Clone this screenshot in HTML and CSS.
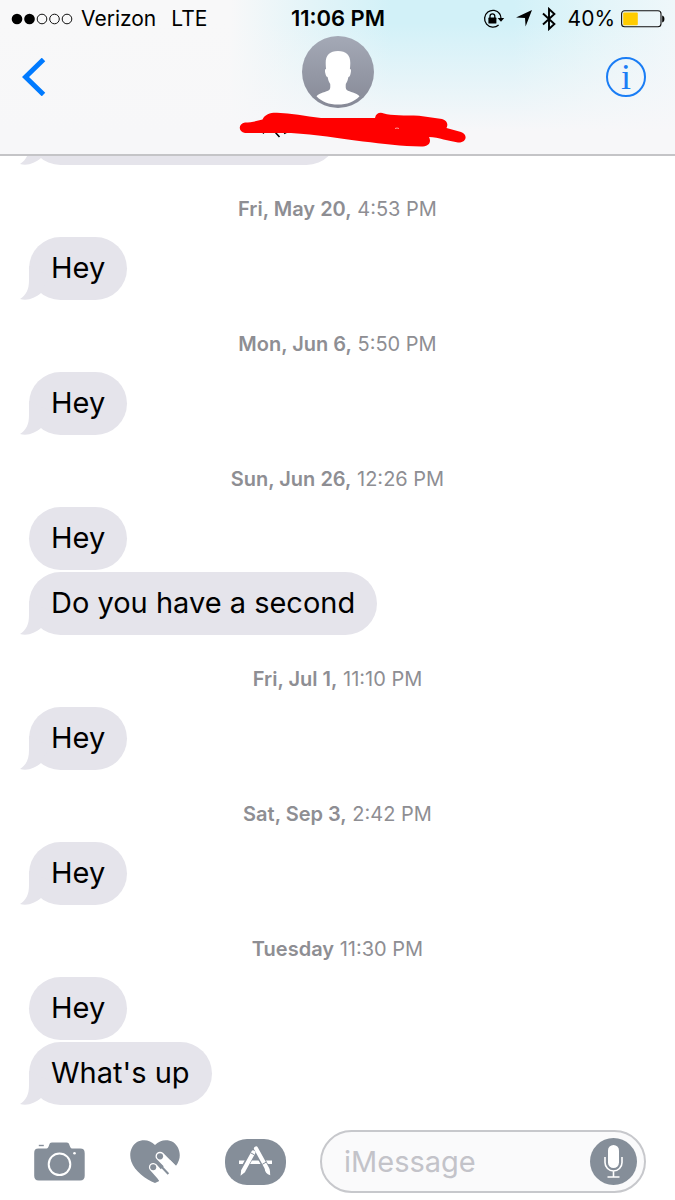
FILE: index.html
```html
<!DOCTYPE html>
<html lang="en">
<head>
  <meta charset="UTF-8">
  <title>Messages</title>
  <meta name="viewport" content="width=device-width,initial-scale=1">
  <link rel="stylesheet" href="styles.css">
</head>
<body>

  <header class="header">
    <div class="status">
      <div class="status-left">
        <svg class="signal" width="62" height="12" viewBox="0 0 62 12">
          <circle cx="6" cy="6" r="5.3"/>
          <circle cx="18.5" cy="6" r="5.3"/>
          <g fill="none" stroke="#111" stroke-width="1">
            <circle cx="31" cy="6" r="4.8"/>
            <circle cx="43.5" cy="6" r="4.8"/>
            <circle cx="56" cy="6" r="4.8"/>
          </g>
        </svg>
        <span>Verizon</span>
        <span class="network">LTE</span>
      </div>
      <div class="clock">11:06 PM</div>
      <div class="status-right">
        <!-- rotation lock -->
        <svg width="22" height="20" viewBox="0 0 22 20">
          <path d="M16.8 4.8A8.4 8.4 0 1 0 15.6 16" fill="none" stroke="#000" stroke-width="1.3"/>
          <path d="M16.2 4.2C17.4 5.7 18 7.4 18 9.5" fill="none" stroke="#000" stroke-width="1.3"/>
          <path d="M14.6 9h6.6L18 12.8z"/>
          <rect x="5.4" y="8.6" width="8" height="6" rx=".6"/>
          <path d="M7 9V7.2a2.4 2.4 0 0 1 4.8 0V9" fill="none" stroke="#000" stroke-width="1.3"/>
        </svg>
        <!-- location -->
        <svg class="location" width="16" height="17" viewBox="0 0 16 17">
          <path d="M16 0L9.6 16.5 9 8 0 7.4z"/>
        </svg>
        <!-- bluetooth -->
        <svg width="14" height="24" viewBox="0 0 14 24">
          <path d="M1 6.5L12.4 17 7 22V2l5.4 5L1 17.5" fill="none" stroke="#000" stroke-width="1.9"/>
        </svg>
        <span class="percent">40%</span>
        <!-- battery -->
        <svg width="44" height="18" viewBox="0 0 44 18">
          <rect x=".6" y=".8" width="39.4" height="16" rx="3" fill="none" stroke="#111" stroke-width="1.1"/>
          <rect x="2.2" y="2.4" width="14.6" height="12.8" rx="1" fill="#fc0"/>
          <path d="M41.2 5.4c3 .6 3 6.4 0 7z"/>
        </svg>
      </div>
    </div>

    <nav class="nav">
      <button class="nav-button back" aria-label="Back">
        <svg width="24" height="38" viewBox="0 0 24 38">
          <path d="M21.5 1.5L3.5 19l18 17.5" fill="none" stroke="#007aff" stroke-width="5"/>
        </svg>
      </button>
      <div class="contact">
        <svg width="72" height="72" viewBox="0 0 72 72">
          <defs>
            <linearGradient id="avatar" x1="0" y1="0" x2="0" y2="1">
              <stop offset="0" stop-color="#a4a9b6"/>
              <stop offset="1" stop-color="#868996"/>
            </linearGradient>
          </defs>
          <circle cx="36" cy="36" r="36" fill="url(#avatar)"/>
          <path fill="#fff" d="M36 15c-8 0-12.5 4-12.3 12 0 2 .2 4.5.4 6-1.5 0-1.2 2.4-.7 4.5.5 2 1 3.5 2.2 3.5.5 3 1.4 5.2 2.6 7 .2 2.8.2 5-1 6-2.7 2-9.7 2.700-12.700 6.200C19.500 65.600 27 68.600 36 68.600s16.500-3 21.500-8.400C54.500 56.700 47.500 56 44.800 54c-1.200-1-1.200-3.200-1-6 1.200-1.800 2.100-4 2.600-7 1.200 0 1.700-1.500 2.200-3.500.5-2.100.8-4.500-.7-4.500.2-1.500.4-4 .4-6 .2-8-4.300-12-12.300-12z"/>
        </svg>
        <svg width="258" height="36" viewBox="-30 0 258 36">
          <path d="M24 21.500l1-1.500M36 20l4.500 5M45 21.500l3-1.500" fill="none" stroke="#000" stroke-width="1.600"/>
          <path fill="#f00" d="M6 10.500C12 10.500 18 9 23.500 7.500 26 2 32 .5 38 .8 52 1.500 66 4 82 6H136C137 1 141 0 145 1.500 152 4 166 3 180 3.800L203 7C208 8.500 209.500 12 207.500 16L222 20C229 22 228 31 219 30.500 209 29 200 25.500 190 25 193 31 189 34.500 182 34.500 163 34.500 144 31.500 124 29.500 98 26 78 22.500 52 21H6C-1 20 -1 11.500 6 10.500z"/>
          <path d="M156 16.500q2-1 4 0" fill="none" stroke="#ff9a9a"/>
        </svg>
      </div>
      <button class="nav-button info" aria-label="Details"><span class="info-mark">i</span></button>
    </nav>
  </header>

  <main class="thread">
    <div class="bubble tail earlier"></div>

    <div class="stamp"><b>Fri, May 20,</b> 4:53 PM</div>
    <div class="bubble tail">Hey</div>

    <div class="stamp"><b>Mon, Jun 6,</b> 5:50 PM</div>
    <div class="bubble tail">Hey</div>

    <div class="stamp"><b>Sun, Jun 26,</b> 12:26 PM</div>
    <div class="bubble">Hey</div>
    <div class="bubble tail">Do you have a second</div>

    <div class="stamp"><b>Fri, Jul 1,</b> 11:10 PM</div>
    <div class="bubble tail">Hey</div>

    <div class="stamp"><b>Sat, Sep 3,</b> 2:42 PM</div>
    <div class="bubble tail">Hey</div>

    <div class="stamp"><b>Tuesday</b> 11:30 PM</div>
    <div class="bubble">Hey</div>
    <div class="bubble tail">What's up</div>
  </main>

  <form class="composer">
    <button type="button" class="tool" aria-label="Camera">
      <svg width="51" height="40" viewBox="0 0 51 40">
        <path fill="#858e99" d="M4.500 6.600h7c2 0 2.800-1 3.300-2.600C15.500 1.500 16 .5 18 .5h14.500c2 0 2.600 1 3.300 3.500.5 1.600 1.300 2.600 3.300 2.600h7c3.200 0 4.600 1.400 4.600 4.600v22.600c0 3.200-1.400 4.700-4.600 4.700H4.800C1.600 38.500.2 37 .2 33.800V11.200c0-3.200 1.200-4.600 4.300-4.600z"/>
        <rect x="4.800" y="2.800" width="5" height="1.400" fill="#858e99"/>
        <circle cx="25.500" cy="22.300" r="10.800" fill="none" stroke="#fff" stroke-width="2"/>
        <circle cx="40.500" cy="11.300" r="1.300" fill="#fff"/>
      </svg>
    </button>
    <button type="button" class="tool" aria-label="Digital Touch">
      <svg width="50" height="44" viewBox="0 0 50 44">
        <path fill="#858e99" d="M25 5C30-.8 38-.8 43 2c6 4 8 12 6 18C46 29 35 39 25 43 16 39.500 4.500 31 1.300 21.500-1.300 14 1 6 7 2 12-.8 20-.8 25 5z"/>
        <path fill="#fff" d="M33 27L40 20 52 32 40 46 30 43 26 34z"/>
        <path d="M30 16.200L52 38.500" stroke="#fff" stroke-width="9" stroke-linecap="round"/>
        <path d="M23.200 27.200L39 45" stroke="#fff" stroke-width="8.600" stroke-linecap="round"/>
        <circle cx="30" cy="16.300" r="3.100" fill="#858e99"/>
        <circle cx="23.200" cy="27.200" r="3" fill="#858e99"/>
        <path d="M28.500 23.500L38.400 34" fill="none" stroke="#858e99" stroke-width="2"/>
      </svg>
    </button>
    <button type="button" class="tool" aria-label="Apps">
      <svg width="61" height="46" viewBox="0 0 61 46">
        <rect width="61" height="46" rx="22" fill="#858e99"/>
        <path d="M14 23.200h33" stroke="#fff" stroke-width="3.600"/>
        <path d="M28.800 11L18 31.500" stroke="#858e99" stroke-width="6.500"/>
        <path d="M30.500 9l12.500 23" stroke="#858e99" stroke-width="6.500"/>
        <path d="M28.300 13.500L18.700 31" stroke="#fff" stroke-width="4.200" stroke-linecap="round"/>
        <path d="M16.300 30.500l4.200 2.300-5 3.900z" fill="#fff"/>
        <path d="M31 9.500L42.300 30" stroke="#fff" stroke-width="4.200" stroke-linecap="round"/>
        <path d="M39.700 29.600c2-1.500 4.200-.8 5 1.500.6 1.800.2 3.400.6 5.200-3.600-1-5.600-3.300-5.600-6.700z" fill="#fff"/>
        <path d="M37.300 25.300l4-2.200M25.600 13.800l3.700 2" stroke="#858e99" stroke-width="1"/>
      </svg>
    </button>
    <div class="field">
      <input class="message" type="text" placeholder="iMessage" aria-label="iMessage">
      <button type="button" class="mic" aria-label="Dictate">
        <svg width="47" height="47" viewBox="0 0 47 47">
          <circle cx="23.500" cy="23.500" r="23.500" fill="#858e99"/>
          <rect x="18" y="7" width="11" height="23" rx="5.500" fill="#fff"/>
          <path d="M15 19v5.500a8.500 8.500 0 0 0 17 0V19M23.500 33v6M17.500 39h12" fill="none" stroke="#fff" stroke-width="1.600"/>
        </svg>
      </button>
    </div>
  </form>

</body>
</html>
```
FILE: styles.css
```css
/* reset */
* { margin:0; padding:0; box-sizing:border-box }
html, body { height:100%; }
body {
  display:flex; flex-direction:column;
  background:#fff; color:#000;
  font-family:Inter, "Liberation Sans", sans-serif;
}
svg { display:block; flex:none; }
button { border:0; background:none; font:inherit; cursor:pointer; }

/* header */
.header {
  flex:none;
  background:
    linear-gradient(rgba(247,248,249,0) 15%, #f7f7f9 85%),
    linear-gradient(90deg, #f8f8f9 34%, #e3f4f8 46%, #d2f1f8 58%, #d2f1f8 76%, #e4f5f9 90%, #eff7fa);
  border-bottom:2px solid #c4c4c7;
}

/* status bar */
.status {
  display:grid; grid-template-columns:1fr auto 1fr;
  align-items:center;
  height:36px;
  padding:1px 10px 0 11px;
  font-size:21px; line-height:35px;
}
.status-left, .status-right { display:flex; align-items:center; }
.status-left { gap:8px; }
.status-right { justify-content:flex-end; }
.network { margin-left:7px; }
.clock { font-size:22px; font-weight:600; }
.location { margin:0 10px 0 11px; }
.percent { margin:0 6px 0 12px; }

/* navigation */
.nav {
  display:grid; grid-template-columns:1fr auto 1fr;
  height:118px;
}
.nav-button { display:flex; align-items:center; height:82px; }
.back { padding-left:22px; }
.info { justify-self:end; padding-right:29px; }
.info-mark {
  width:40px; height:40px;
  border:2px solid #1a7df5; border-radius:50%;
  color:#1a7df5;
  font:36px/36px "Liberation Serif", serif;
  text-align:center;
}
.contact {
  display:flex; flex-direction:column; align-items:center;
  gap:4px;
}

/* conversation, kept at its newest message */
.thread {
  flex:1; min-height:0;
  display:flex; flex-direction:column;
  justify-content:flex-end; align-items:flex-start;
  padding:0 29px 25px;
  overflow:hidden;
}
.stamp {
  align-self:center;
  margin:32px 0 16px;
  color:#8e8e93;
  font-size:20px; line-height:24px;
}
.stamp b { font-weight:600; }

.bubble {
  position:relative;
  flex:none;
  height:63px;
  padding:0 22px;
  background:#e5e4eb;
  border-radius:32px;
  font-size:29px; line-height:61px;
}
.bubble + .bubble { margin-top:2px; }
.tail::before {
  content:"";
  position:absolute; left:-9px; bottom:0;
  width:30px; height:34px;
  background:#e5e4eb;
  clip-path:path("M9 0V14C9 24 6 29 0 33C8 35 15 32 21 27L30 10Z");
}
.earlier { width:50%; }

/* composer */
.composer {
  flex:none;
  display:flex; align-items:center;
  gap:45px;
  padding:0 29px 7px 34px;
}
.field {
  flex:1; min-width:0;
  display:flex; align-items:center;
  height:63px;
  margin-left:-11px;
  padding:0 7px 0 22px;
  background:#fafafb;
  border:2px solid #c7c8cc; border-radius:32px;
}
.message {
  flex:1; min-width:0;
  height:47px;
  border:0; outline:0; background:none;
  font:29px Inter, "Liberation Sans", sans-serif;
}
.message::placeholder { color:#c3c3c9; opacity:1; }
```
